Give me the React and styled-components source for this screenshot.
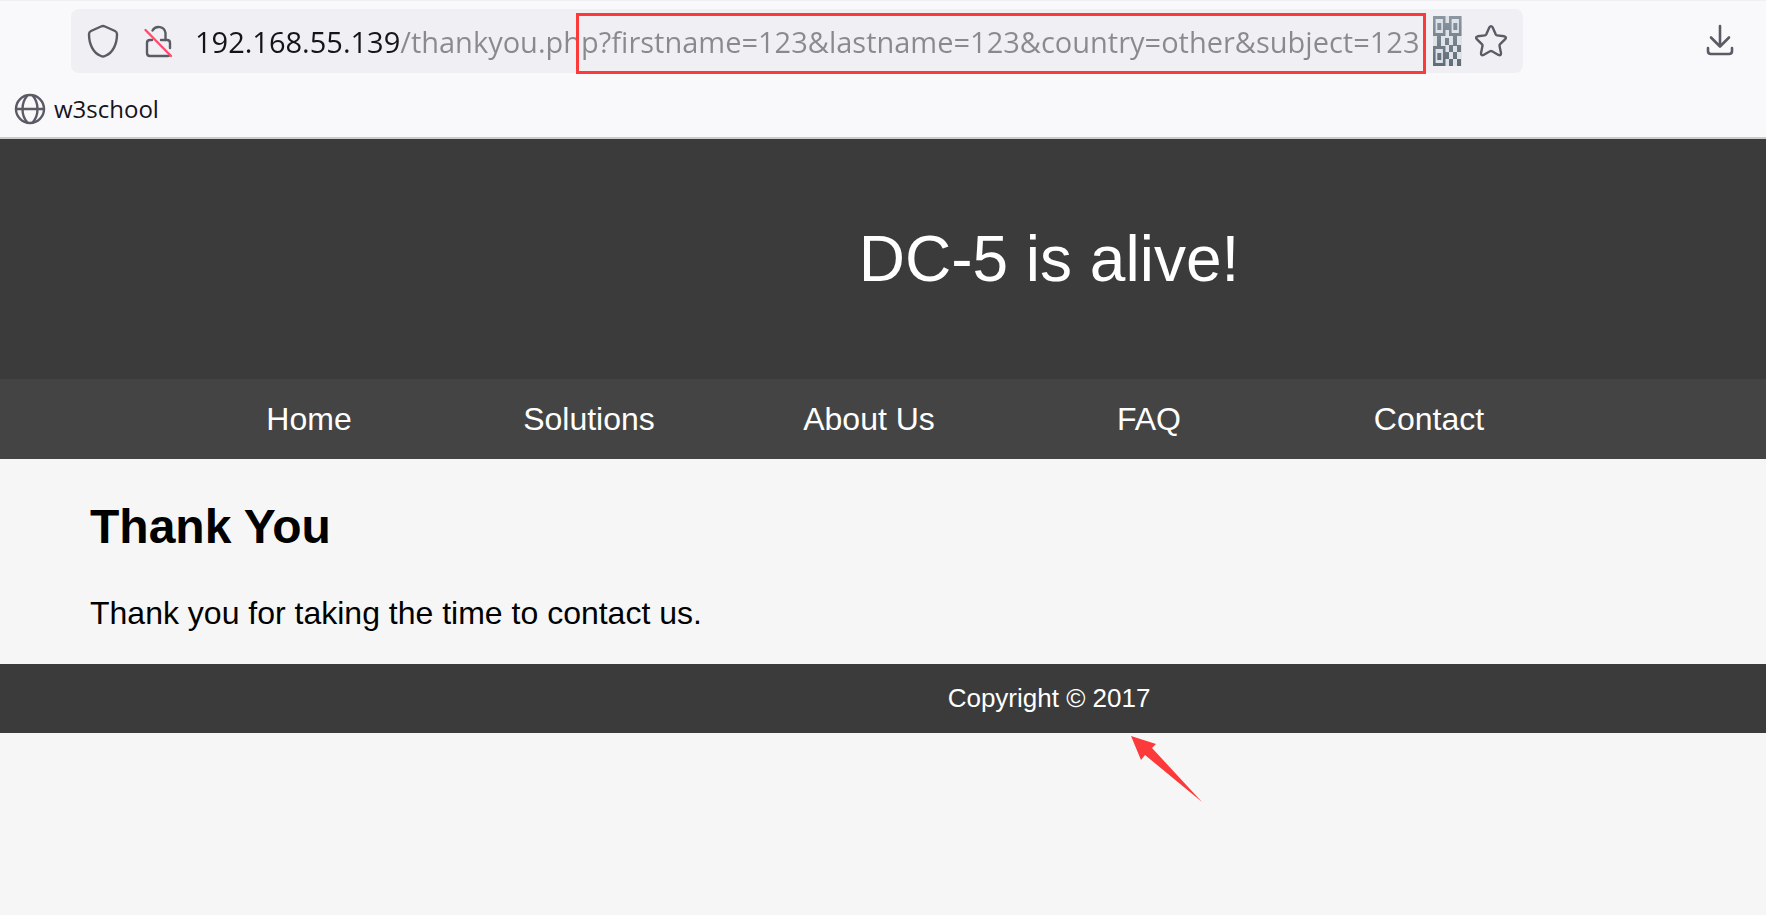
import React from "react";
import styled, { createGlobalStyle } from "styled-components";

const GlobalStyle = createGlobalStyle`
  * { box-sizing: border-box; }
  body {
    margin: 0;
    background: #f6f6f6;
    color: #000;
    font-family: "Liberation Sans", Arial, sans-serif;
    font-size: 32px;
  }
`;

const Page = styled.div`
  min-height: 100vh;
`;

const Chrome = styled.div`
  background: #f9f9fb;
  border-top: 1px solid #f0f0f2;
  border-bottom: 2px solid #cccccc;
  font-family: "Open Sans", "Segoe UI", sans-serif;
`;

const Toolbar = styled.div`
  display: flex;
  align-items: center;
  justify-content: space-between;
  padding: 8px 29px 0 71px;
`;

const UrlBar = styled.form`
  position: relative;
  display: flex;
  align-items: center;
  flex: 1;
  height: 64px;
  margin-right: 180px;
  padding: 0 15px 0 16px;
  border-radius: 8px;
  background: #f0f0f4;
`;

const IconButton = styled.button`
  display: flex;
  flex: none;
  padding: 0;
  margin-right: ${(p) => p.$gap || 0}px;
  border: 0;
  background: none;
  color: #5b5b66;
`;

const UrlInput = styled.input`
  flex: 1;
  min-width: 0;
  height: 48px;
  padding: 0;
  border: 0;
  outline: 0;
  font: 29px "Open Sans", "Segoe UI", sans-serif;
  color: #8a8a8e;
  background: linear-gradient(to right, #15141a 205px, #8a8a8e 205px);
  background-clip: text;
  -webkit-background-clip: text;
  -webkit-text-fill-color: transparent;
`;

const Highlight = styled.div`
  position: absolute;
  top: 4px;
  left: 505px;
  right: 97px;
  height: 61px;
  border: 3px solid #fc3a3a;
  pointer-events: none;
`;

const Bookmarks = styled.div`
  display: flex;
  align-items: center;
  height: 64px;
  padding: 8px 14px 0;
`;

const Bookmark = styled.a`
  display: flex;
  align-items: center;
  gap: 8px;
  color: #15141a;
  font-size: 24px;
  line-height: 32px;
  text-decoration: none;

  svg { color: #5b5b66; }
`;

const Header = styled.header`
  padding: 80px 0 80px 332px;
  background: #3b3b3b;
  color: #fff;
  font-size: 64px;
  line-height: 80px;
  text-align: center;
`;

const Nav = styled.nav`
  display: flex;
  padding-left: 169px;
  background: #444;
`;

const NavLink = styled.a`
  width: 280px;
  color: #fff;
  line-height: 80px;
  text-align: center;
  text-decoration: none;
`;

const Content = styled.main`
  padding: 32px 90px;
`;

const Title = styled.h1`
  margin: 8px 0 40px;
  font-size: 48px;
  line-height: 56px;
`;

const Message = styled.p`
  margin: 0;
  line-height: 37px;
`;

const Footer = styled.footer`
  padding: 16px 0 16px 332px;
  background: #3b3b3b;
  color: #fff;
  font-size: 26px;
  line-height: 37px;
  text-align: center;
`;

const Copyright = styled.span`
  position: relative;
`;

const Arrow = styled.svg`
  position: absolute;
  top: 53px;
  right: -53px;
  fill: #fc3a3a;
`;

const line = { fill: "none", stroke: "currentColor", strokeWidth: 2.4, strokeLinecap: "round", strokeLinejoin: "round" };

const Shield = () => (
  <svg width="32" height="34" viewBox="0 0 32 34" {...line}>
    <path d="M16 2 Q17 2 18 2.5 L28 7 Q30 8 30 10 C30 20 26 29 18 32 Q16 33 14 32 C6 29 2 20 2 10 Q2 8 4 7 L14 2.5 Q15 2 16 2Z" />
  </svg>
);

const BrokenLock = () => (
  <svg width="32" height="34" viewBox="0 0 32 34" {...line}>
    <path d="M9.5 6.5 A7 7 0 0 1 22.5 9 V16 H24 Q27 16 27 19 V24" />
    <path d="M9 16 H7 Q4 16 4 19 V29 Q4 32 7 32 H25 Q26 32 26.5 31" />
    <path d="M18 16 H22" />
    <path d="M2.5 6 L28 32" stroke="#ff4a70" />
  </svg>
);

const finders = [[0, 0], [16, 0], [0, 30]];

const modules = [
  [12, 7], [4, 20], [20, 20], [4, 24], [12, 22], [20, 23],
  [16, 29], [24, 29], [12, 36], [20, 36], [16, 43], [24, 43],
];

const QrCode = () => (
  <svg width="29" height="50" viewBox="0 0 29 50">
    <defs>
      <linearGradient id="qr-ink" gradientUnits="userSpaceOnUse" x1="0" y1="0" x2="0" y2="50">
        <stop offset="0" stopColor="#8b98a4" />
        <stop offset="1" stopColor="#5f6c76" />
      </linearGradient>
    </defs>
    <rect width="29" height="50" fill="#dfe3e8" />
    <g fill="url(#qr-ink)">
      {finders.map(([x, y]) => (
        <g key={`${x}-${y}`}>
          <path
            fillRule="evenodd"
            d={`M${x} ${y}h12.5v20h-12.5z M${x + 2.6} ${y + 3}v14h7.3v-14z`}
          />
          <rect x={x + 4.3} y={y + 7} width="4" height="7" />
        </g>
      ))}
      {modules.map(([x, y]) => <rect key={`${x}-${y}`} x={x} y={y} width="4" height="7" />)}
    </g>
  </svg>
);

const Star = () => (
  <svg width="34" height="34" viewBox="0 0 34 34" {...line}>
    <path d="M15.3 3.5 Q17 .8 18.7 3.5 L21.8 10.5 Q22.2 11.3 23 11.4 L30.3 12.3 Q33 13 31.2 15.2 L25.9 20.3 Q25.3 20.9 25.5 21.7 L27 29.2 Q27 32 24.5 31 L18 27.3 Q17 26.8 16 27.3 L9.5 31 Q7 32 7 29.2 L8.5 21.7 Q8.7 20.9 8.1 20.3 L2.8 15.2 Q1 13 3.7 12.3 L11 11.4 Q11.8 11.3 12.2 10.5Z" />
  </svg>
);

const Download = () => (
  <svg width="34" height="34" viewBox="0 0 34 34" {...line} strokeWidth="2.6">
    <path d="M17 2 V22 M8 13.5 L17 22.5 L26 13.5" />
    <path d="M5 24 V27 Q5 30 8 30 H26 Q29 30 29 27 V24" />
  </svg>
);

const Globe = () => (
  <svg width="32" height="32" viewBox="0 0 32 32" {...line}>
    <circle cx="16" cy="16" r="14" />
    <path d="M2 16 H30 M13 3 C7 10 7 22 13 29 M19 3 C25 10 25 22 19 29" />
  </svg>
);

const links = ["Home", "Solutions", "About Us", "FAQ", "Contact"];

export default function App() {
  return (
    <Page>
      <GlobalStyle />
      <Chrome>
        <Toolbar>
          <UrlBar onSubmit={(e) => e.preventDefault()}>
            <IconButton type="button" aria-label="Tracking protection" $gap={24}><Shield /></IconButton>
            <IconButton type="button" aria-label="Connection not secure" $gap={20}><BrokenLock /></IconButton>
            <UrlInput
              aria-label="Address"
              spellCheck={false}
              defaultValue="192.168.55.139/thankyou.php?firstname=123&lastname=123&country=other&subject=123"
            />
            <IconButton type="button" aria-label="QR code" $gap={12}><QrCode /></IconButton>
            <IconButton type="button" aria-label="Bookmark this page"><Star /></IconButton>
            <Highlight />
          </UrlBar>
          <IconButton type="button" aria-label="Downloads"><Download /></IconButton>
        </Toolbar>
        <Bookmarks>
          <Bookmark href="#w3school"><Globe />w3school</Bookmark>
        </Bookmarks>
      </Chrome>
      <Header>DC-5 is alive!</Header>
      <Nav>
        {links.map((name) => <NavLink key={name} href={`#${name}`}>{name}</NavLink>)}
      </Nav>
      <Content>
        <Title>Thank You</Title>
        <Message>Thank you for taking the time to contact us.</Message>
      </Content>
      <Footer>
        <Copyright>
          Copyright © 2017
          <Arrow width="72" height="68" viewBox="0 0 72 68" aria-hidden="true">
            <path d="M0 0 L25 8 L21 12 L71 66 L14 19 L10 24Z" />
          </Arrow>
        </Copyright>
      </Footer>
    </Page>
  );
}
